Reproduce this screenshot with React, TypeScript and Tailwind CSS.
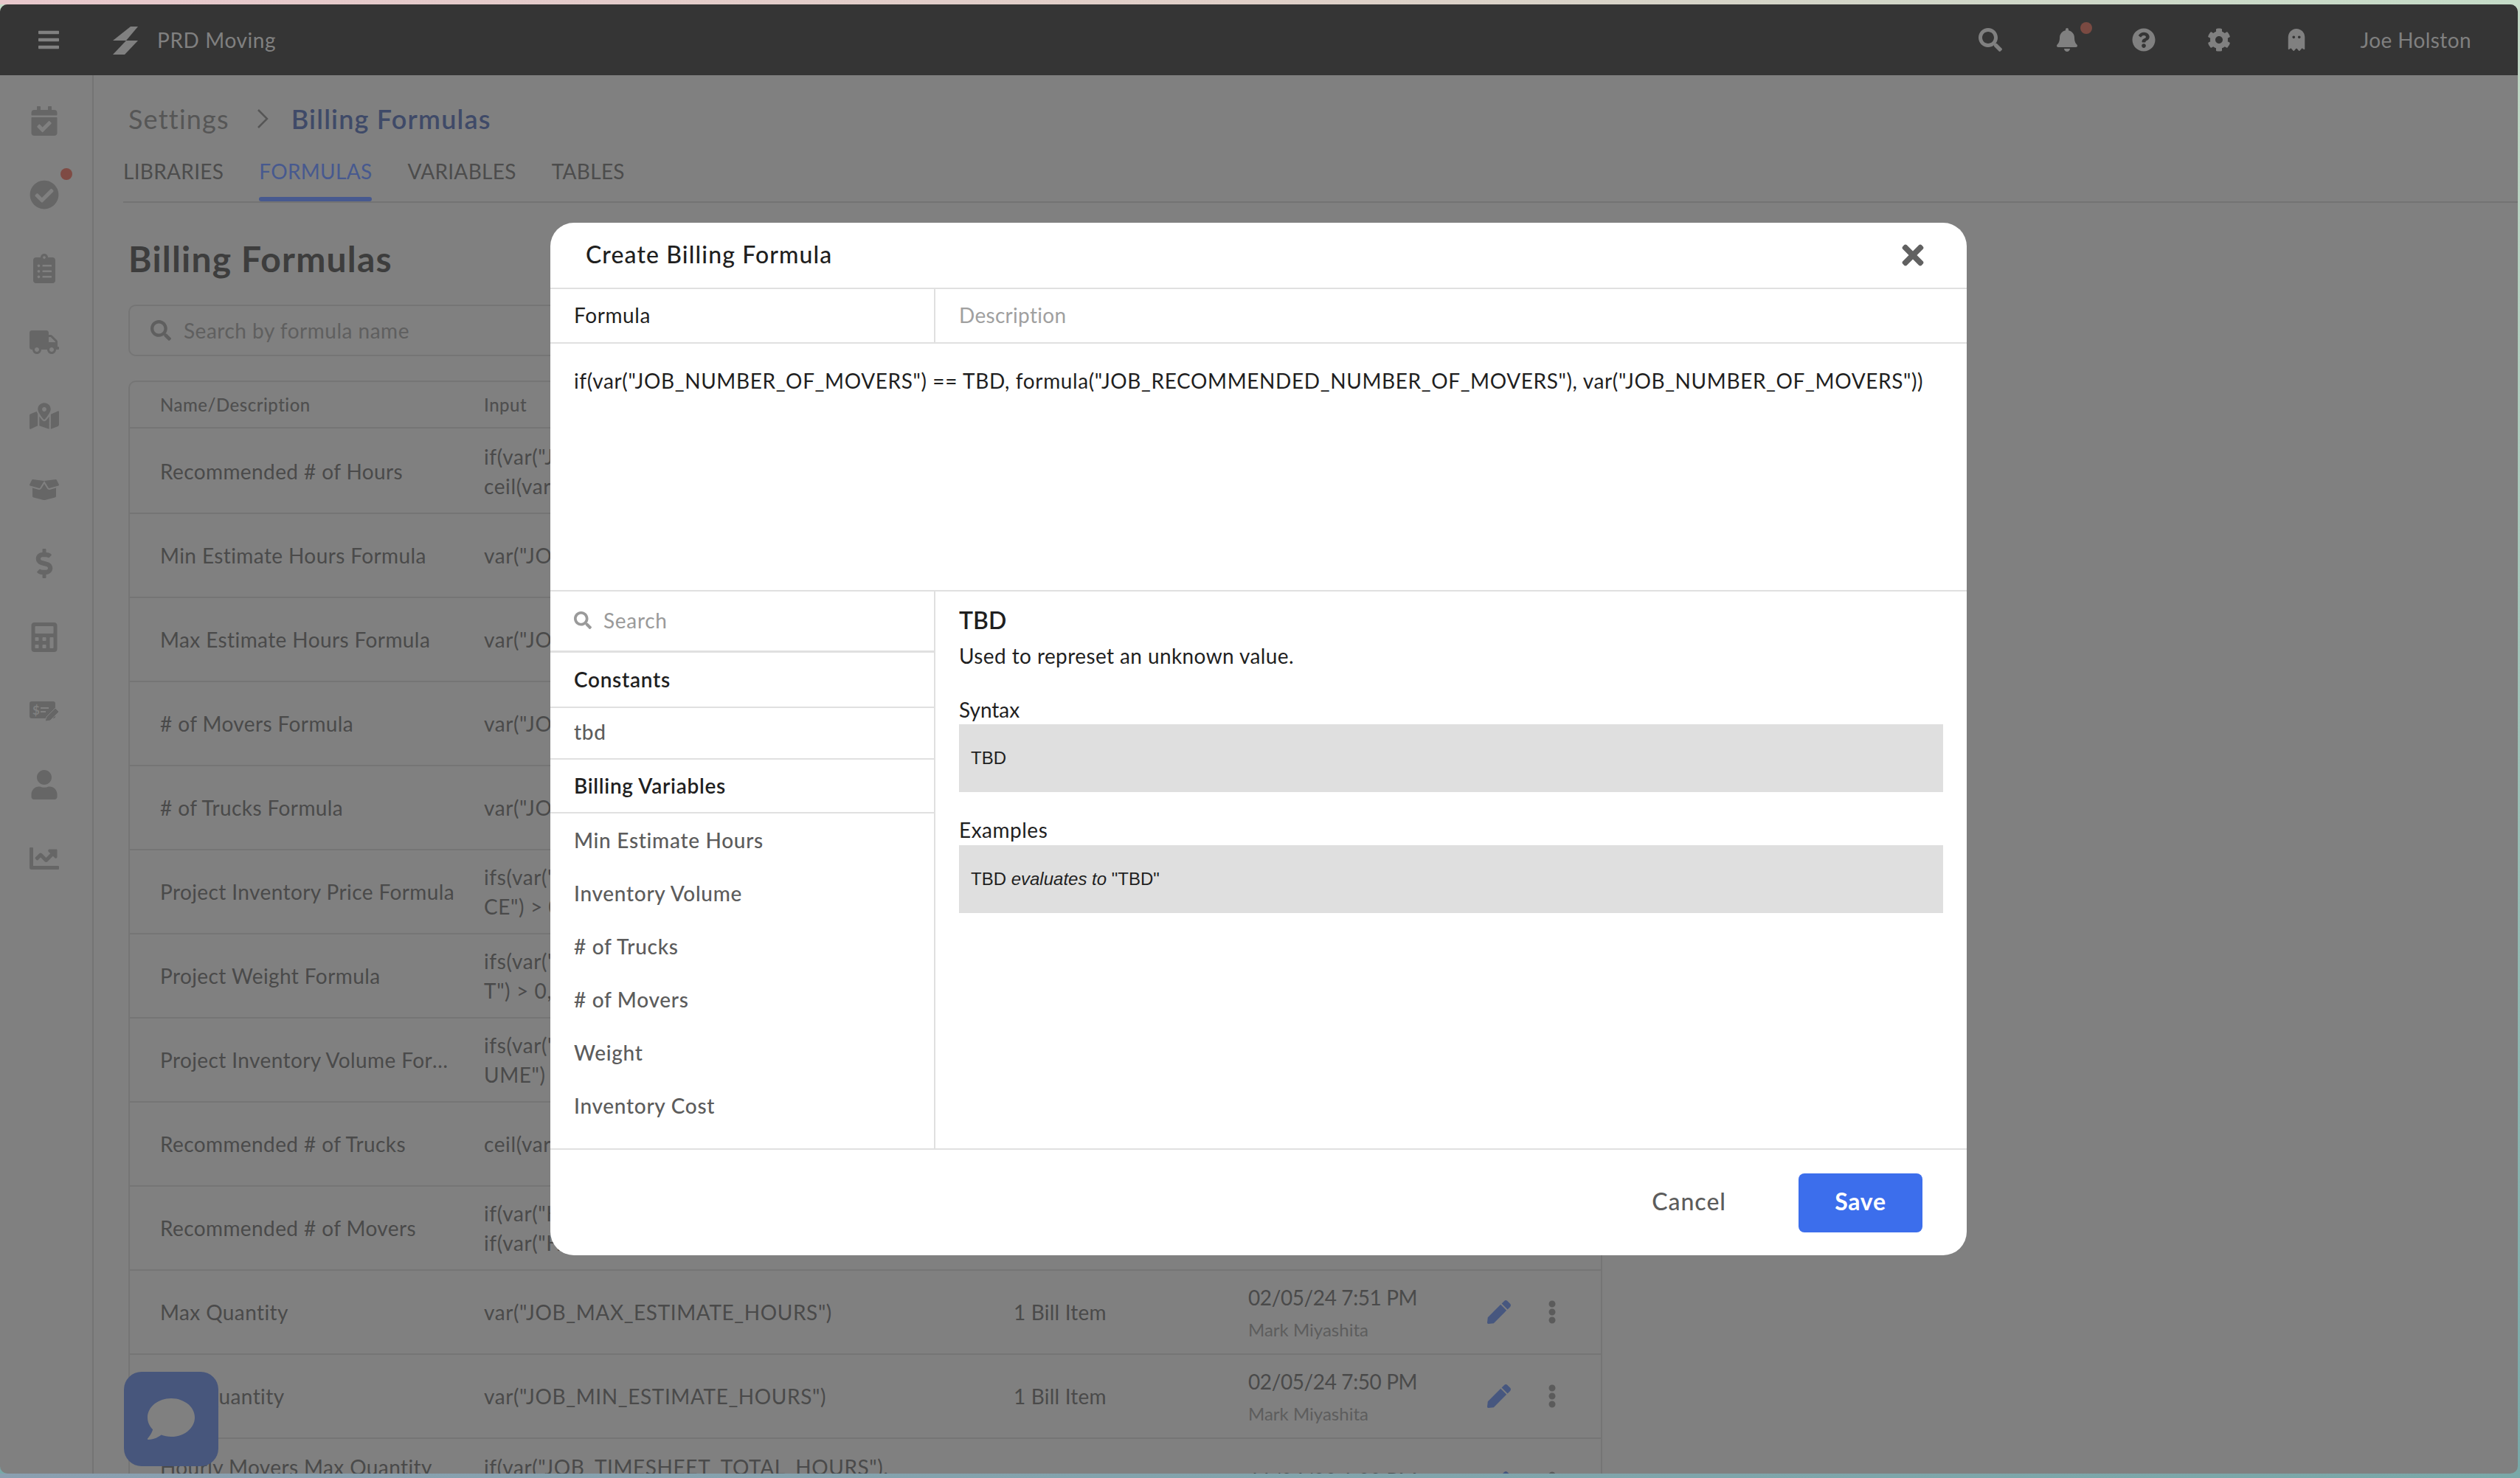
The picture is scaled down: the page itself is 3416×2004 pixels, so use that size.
import React from 'react';
import {
  FaBars, FaBell, FaBoxOpen, FaCalculator, FaCalendarCheck, FaChartLine, FaCheckCircle, FaClipboardList,
  FaCog, FaComment, FaDollarSign, FaEllipsisV, FaGhost, FaMapMarkedAlt, FaPen, FaQuestionCircle, FaSearch,
  FaTimes, FaTruck, FaUser,
} from 'react-icons/fa';

const rows = [
  { name: 'Recommended # of Hours', input: ['if(var("JOB_NUMBER_OF_HOURS") == TBD,', 'ceil(var("JOB_TOTAL_HOURS")), 0)'], bill: '2 Bill Items', date: '02/05/24 8:12 PM' },
  { name: 'Min Estimate Hours Formula', input: ['var("JOB_MIN_ESTIMATE_HOURS")'], bill: '1 Bill Item', date: '02/05/24 8:10 PM' },
  { name: 'Max Estimate Hours Formula', input: ['var("JOB_MAX_ESTIMATE_HOURS")'], bill: '1 Bill Item', date: '02/05/24 8:09 PM' },
  { name: '# of Movers Formula', input: ['var("JOB_NUMBER_OF_MOVERS")'], bill: '1 Bill Item', date: '02/05/24 8:07 PM' },
  { name: '# of Trucks Formula', input: ['var("JOB_NUMBER_OF_TRUCKS")'], bill: '1 Bill Item', date: '02/05/24 8:05 PM' },
  { name: 'Project Inventory Price Formula', input: ['ifs(var("PROJECT_INVENTORY_PRI', 'CE") > 0, var("JOB_PRICE"))'], bill: '1 Bill Item', date: '02/05/24 8:03 PM' },
  { name: 'Project Weight Formula', input: ['ifs(var("PROJECT_TOTAL_WEIGH', 'T") > 0, var("JOB_WEIGHT"))'], bill: '1 Bill Item', date: '02/05/24 8:01 PM' },
  { name: 'Project Inventory Volume Formula', input: ['ifs(var("PROJECT_TOTAL_VOL', 'UME") > 0, var("JOB_VOLUME"))'], bill: '1 Bill Item', date: '02/05/24 7:59 PM' },
  { name: 'Recommended # of Trucks', input: ['ceil(var("JOB_RECOMMENDED_TRUCKS"))'], bill: '1 Bill Item', date: '02/05/24 7:56 PM' },
  { name: 'Recommended # of Movers', input: ['if(var("HOURS") > 4, 3,', 'if(var("HOURS") > 2, 2, 1))'], bill: '1 Bill Item', date: '02/05/24 7:53 PM' },
  { name: 'Max Quantity', input: ['var("JOB_MAX_ESTIMATE_HOURS")'], bill: '1 Bill Item', date: '02/05/24 7:51 PM' },
  { name: 'Min Quantity', input: ['var("JOB_MIN_ESTIMATE_HOURS")'], bill: '1 Bill Item', date: '02/05/24 7:50 PM' },
  { name: 'Hourly Movers Max Quantity', input: ['if(var("JOB_TIMESHEET_TOTAL_HOURS"),', 'var("JOB_TIMESHEET_TOTAL_HOURS"))'], bill: '1 Bill Item', date: '11/04/23 1:30 PM', top: true },
];

const variables = ['Min Estimate Hours', 'Inventory Volume', '# of Trucks', '# of Movers', 'Weight', 'Inventory Cost'];

const LogoIcon = () => (
  <svg width="60" height="50" viewBox="0 0 60 50" fill="#808080">
    <polygon points="37,7 47,7 31,26 13,26" />
    <polygon points="31,26 47,26 29,45 13,45" />
  </svg>
);

const CheckEditIcon = () => (
  <svg width="60" height="50" viewBox="0 0 60 50">
    <rect x="10" y="12" width="35" height="23" rx="3" fill="#666666" />
    <text x="14" y="30" fontSize="17" fontWeight="700" fill="#808080" fontFamily="Lato, sans-serif">$</text>
    <rect x="25" y="20" width="11" height="2" fill="#808080" />
    <rect x="25" y="25" width="7" height="2" fill="#808080" />
    <path d="M31 39 L33 33 L45 21 L50 26 L38 38 Z" fill="#666666" stroke="#808080" strokeWidth="1" />
  </svg>
);

const SideItem = ({ children }: { children: React.ReactNode }) => (
  <div className="relative h-[100px] flex items-center justify-center">{children}</div>
);

export default function App() {
  return (
    <div className="w-[3416px] h-[2004px] overflow-hidden flex flex-col bg-[linear-gradient(180deg,#c5dcc8,#78a8a8)] font-['Lato',sans-serif]">
      <div className="h-[6px] shrink-0 bg-[linear-gradient(90deg,#e8c8cc,#e0d0c8_50%,#c5dcc8)]"></div>

      {/* App window */}
      <div className="relative w-[3413px] h-[1992px] shrink-0 rounded-[10px] overflow-hidden bg-[#808080] flex flex-col">
        {/* Top bar */}
        <div className="h-[96px] shrink-0 bg-[#353535] flex items-center text-[#808080]">
          <div className="w-[50px] shrink-0"></div>
          <FaBars size={32} className="text-[#808080]" />
          <div className="ml-[58px] -mr-[3px]"><LogoIcon /></div>
          <div className="ml-[16px] text-[28px] leading-[40px] tracking-[0.6px]">PRD Moving</div>
          <div className="ml-auto flex items-center">
            <FaSearch size={32} />
            <div className="relative ml-[72px]">
              <FaBell size={32} />
              <div className="absolute -right-[18px] -top-[8px] w-[16px] h-[16px] rounded-full bg-[#7a4a42]"></div>
            </div>
            <FaQuestionCircle size={32} className="ml-[72px]" />
            <FaCog size={32} className="ml-[70px]" />
            <FaGhost size={30} className="ml-[74px]" />
            <div className="ml-[71px] mr-[63px] text-[28px] leading-[40px] tracking-[0.4px]">Joe Holston</div>
          </div>
        </div>

        <div className="flex-1 min-h-0 flex">
          {/* Sidebar */}
          <div className="w-[127px] shrink-0 border-r-2 border-[#747474] pt-[12px] pr-[6px] text-[#666666]">
            <SideItem><FaCalendarCheck size={40} /></SideItem>
            <SideItem>
              <FaCheckCircle size={40} />
              <div className="absolute left-[82px] top-[14px] w-[16px] h-[16px] rounded-full bg-[#7f4b44]"></div>
            </SideItem>
            <SideItem><FaClipboardList size={40} /></SideItem>
            <SideItem><FaTruck size={40} /></SideItem>
            <SideItem><FaMapMarkedAlt size={40} /></SideItem>
            <SideItem><FaBoxOpen size={40} /></SideItem>
            <SideItem><FaDollarSign size={40} /></SideItem>
            <SideItem><FaCalculator size={40} /></SideItem>
            <SideItem><CheckEditIcon /></SideItem>
            <SideItem><FaUser size={40} /></SideItem>
            <SideItem><FaChartLine size={40} /></SideItem>
          </div>

          {/* Page */}
          <div className="flex-1 min-w-0 pl-[40px]">
            <div className="ml-[7px] mt-[37px] h-[44px] flex items-center text-[36px] leading-[44px] tracking-[1.2px]">
              <span className="text-[#565656]">Settings</span>
              <svg width="18" height="30" viewBox="0 0 18 30" fill="none" stroke="#565656" strokeWidth="2.5" className="ml-[36px] mr-[30px]">
                <path d="M3 3 L15 15 L3 27" />
              </svg>
              <span className="text-[#3f4a68] font-semibold">Billing Formulas</span>
            </div>
            <div className="mt-[29px] h-[63px] border-b-2 border-[#737373] flex gap-[48px] text-[28px] leading-[40px] tracking-[0.3px]">
              <div className="text-[#4c4c4c]">LIBRARIES</div>
              <div className="relative text-[#47598f]">
                FORMULAS
                <div className="absolute left-0 right-0 top-[55px] h-[6px] rounded-full bg-[#47598f]"></div>
              </div>
              <div className="text-[#4c4c4c]">VARIABLES</div>
              <div className="text-[#4c4c4c]">TABLES</div>
            </div>
            <div className="ml-[7px] mt-[46px] h-[60px] text-[48px] leading-[60px] font-bold tracking-[1.2px] text-[#3d3d3d]">Billing Formulas</div>
            <div className="ml-[7px] mt-[32px] w-[1998px] h-[70px] border-2 border-[#757575] rounded-[10px] flex items-center pl-[28px] text-[28px] tracking-[0.5px] text-[#5f5f5f]">
              <FaSearch size={28} className="text-[#5f5f5f]" />
              <span className="ml-[17px]">Search by formula name</span>
            </div>
            <div className="ml-[7px] mt-[33px] w-[1998px] border-x-2 border-t-2 border-[#757575] rounded-t-[10px]">
              <div className="h-[63px] mb-[2px] border-b-2 border-[#757575] grid grid-cols-[480px_718px_318px_1fr] items-center text-[24px] font-medium tracking-[0.5px] text-[#4f4f4f]">
                <div className="pl-[41px]">Name/Description</div>
                <div>Input</div>
                <div>Used By</div>
                <div>Last Updated</div>
              </div>
              {rows.map((row) => (
                <div key={row.name} className="h-[114px] border-b-2 border-[#757575] grid grid-cols-[480px_718px_318px_1fr] items-center text-[28px] leading-[40px] text-[#4a4a4a]">
                  <div className={row.top ? 'pl-[41px] self-start mt-[18px]' : 'pl-[41px]'}><div className="w-[406px] truncate tracking-[0.4px]">{row.name}</div></div>
                  <div className={row.top ? 'self-start mt-[18px] tracking-[0.6px]' : 'tracking-[0.6px]'}>{row.input.map((l) => <div key={l}>{l}</div>)}</div>
                  <div className="tracking-[0.2px]">{row.bill}</div>
                  <div className="flex items-center">
                    <div className={row.top ? 'w-[324px] pt-[36px]' : 'w-[324px] pt-[4px]'}>
                      <div className="tracking-[-0.4px]">{row.date}</div>
                      <div className="mt-[4px] text-[24px] text-[#5d5d5d]">Mark Miyashita</div>
                    </div>
                    <FaPen size={32} className="text-[#47577f]" />
                    <FaEllipsisV size={32} className="ml-[40px] text-[#5b5b5b]" />
                  </div>
                </div>
              ))}
            </div>
          </div>
        </div>

        {/* Chat button */}
        <div className="absolute left-[168px] top-[1854px] w-[128px] h-[128px] rounded-[24px] bg-[#47567c] flex items-center justify-center">
          <FaComment size={64} className="text-[#808080]" />
        </div>

        {/* Modal */}
        <div className="absolute inset-0 pr-[1px] flex items-center justify-center">
          <div className="w-[1920px] h-[1400px] rounded-[32px] bg-white overflow-hidden flex flex-col text-[#1f1f1f]">
            <div className="h-[90px] shrink-0 border-b-2 border-[#e0e0e0] flex items-center justify-between pl-[48px] pr-[52px]">
              <div className="pb-[2px] text-[32px] leading-[40px] font-medium tracking-[1.1px]">Create Billing Formula</div>
              <FaTimes size={42} className="text-[#616161]" />
            </div>
            <div className="h-[74px] shrink-0 border-b-2 border-[#e0e0e0] flex text-[28px]">
              <div className="w-[522px] shrink-0 border-r-2 border-[#e0e0e0] pl-[32px] pb-[2px] flex items-center tracking-[0.6px]">Formula</div>
              <div className="pl-[32px] pb-[2px] flex items-center text-[#a0a0a0] tracking-[0.3px]">Description</div>
            </div>
            <div className="h-[336px] shrink-0 border-b-2 border-[#e0e0e0] pl-[32px] pt-[30px] text-[28px] leading-[40px] tracking-[0.62px]">
              if(var("JOB_NUMBER_OF_MOVERS") == TBD, formula("JOB_RECOMMENDED_NUMBER_OF_MOVERS"), var("JOB_NUMBER_OF_MOVERS"))
            </div>
            <div className="flex-1 min-h-0 flex">
              <div className="w-[522px] shrink-0 border-r-2 border-[#e0e0e0] text-[28px] font-medium tracking-[0.7px]">
                <div className="h-[83px] border-b-[3px] border-[#e0e0e0] flex items-center pl-[32px] pb-[2px] text-[#9a9a9a]">
                  <FaSearch size={24} />
                  <span className="ml-[16px] font-normal">Search</span>
                </div>
                <div className="h-[75px] border-b-2 border-[#e0e0e0] flex items-center pl-[32px] pb-[2px] font-semibold">Constants</div>
                <div className="h-[70px] border-b-2 border-[#e0e0e0] flex items-center pl-[32px] pb-[4px] text-[#5c5c5c]">tbd</div>
                <div className="h-[73px] border-b-2 border-[#e0e0e0] flex items-center pl-[32px] pb-[2px] font-semibold">Billing Variables</div>
                {variables.map((v) => (
                  <div key={v} className="h-[72px] flex items-center pl-[32px] text-[#5c5c5c]">{v}</div>
                ))}
              </div>
              <div className="flex-1 min-w-0 px-[32px] pt-[19px]">
                <div className="text-[32px] leading-[40px] font-semibold">TBD</div>
                <div className="mt-[8px] text-[28px] leading-[40px] tracking-[0.4px]">Used to represet an unknown value.</div>
                <div className="mt-[33px] text-[28px] leading-[40px]">Syntax</div>
                <div className="h-[92px] bg-[#dfdfdf] flex items-center pl-[16px] font-['Liberation_Sans',sans-serif] text-[24px]">TBD</div>
                <div className="mt-[32px] pb-[2px] text-[28px] leading-[38px] tracking-[0.5px]">Examples</div>
                <div className="h-[92px] bg-[#dfdfdf] flex items-center pl-[16px] font-['Liberation_Sans',sans-serif] text-[24px] whitespace-pre">
                  TBD <i>evaluates to</i> "TBD"
                </div>
              </div>
            </div>
            <div className="h-[145px] shrink-0 border-t-2 border-[#e0e0e0] flex items-center justify-end pr-[60px]">
              <div className="pb-[4px] text-[32px] font-medium tracking-[1px] text-[#5c5c5c]">Cancel</div>
              <div className="ml-[98px] w-[168px] h-[80px] rounded-[8px] bg-[#3c6eec] flex items-center justify-center pb-[3px] text-[32px] font-bold tracking-[0.7px] text-white">Save</div>
            </div>
          </div>
        </div>
      </div>

      <div className="flex-1 bg-[linear-gradient(90deg,#8a9fb0,#7aa8a8)]"></div>
    </div>
  );
}
